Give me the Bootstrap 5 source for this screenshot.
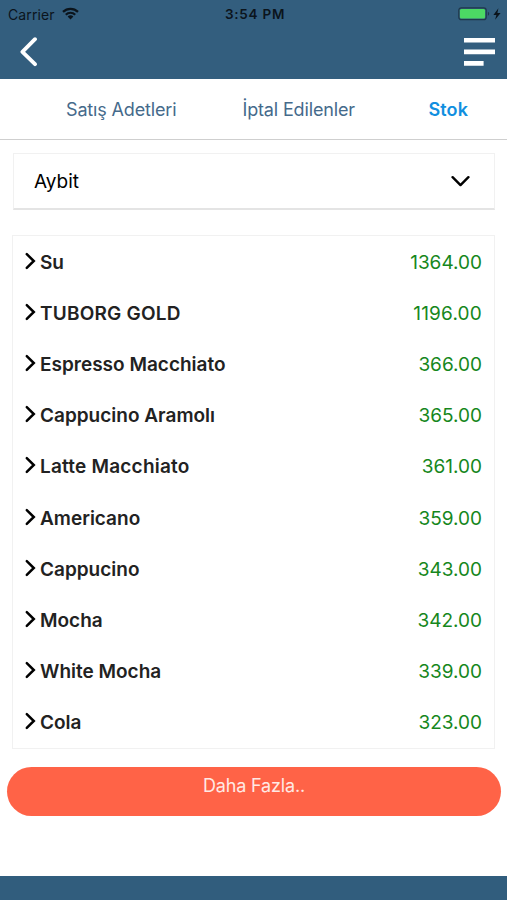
<!DOCTYPE html>
<html lang="tr">
<head>
<meta charset="utf-8">
<meta name="viewport" content="width=device-width, initial-scale=1">
<title>Stok</title>
<link href="https://cdn.jsdelivr.net/npm/bootstrap@5.3.0/dist/css/bootstrap.min.css" rel="stylesheet">
<style>
  body { font-family: Inter, "Liberation Sans", sans-serif; height: 900px; overflow: hidden; color: #222; }
  svg { display: block; flex: none; }
  .app-header { background: #335e7e; height: 79px; }
  .status-bar { height: 27px; padding: 0 5px 0 8px; font-size: 14px; color: #0b141c; }
  .status-bar > div { flex: 1 1 0; }
  .carrier { letter-spacing: .1px; padding-top: 1px; }
  .wifi { margin-left: 7px; margin-bottom: 1px; }
  .status-time { font-size: 13.5px; font-weight: 600; letter-spacing: .75px; padding-top: 1px; }
  .title-bar { height: 49px; padding: 0 11px 0 19px; }
  .plain-btn { background: none; border: 0; padding: 0; }
  .tab-strip { height: 61px; border-bottom: 1px solid #cfcfcf; padding: 0 39px 0 66px; }
  .tab-strip .nav-link { padding: 0; font-size: 18px; line-height: 27px; color: #456a8b; letter-spacing: -.15px; }
  .tab-strip .nav-link + .nav-link { margin-left: 66px; }
  .tab-strip .nav-link.active { color: #118fe0; font-weight: 600; letter-spacing: .1px; margin-left: auto; }
  .picker { margin: 13px 12px 0 13px; height: 57px; padding: 0 24px 0 20px; border: 1px solid #f1f1f1; border-bottom: 2px solid #e4e4e4; font-size: 19px; background: #fff; }
  .picker span { padding-top: 2px; }
  .stock-list { margin: 25px 12px 0 12px; border: 1px solid #f1f1f1; height: 514px; }
  .stock-row { flex: 1 1 0; padding: 0 12px 0 12px; font-size: 19px; line-height: 28px; }
  .stock-row span { padding-top: 2px; }
  .chev { margin-bottom: 2px; }
  .stock-name { font-weight: 600; margin-left: 4px; }
  .stock-qty { color: #16871c; }
  .wide { letter-spacing: .2px; }
  .more-btn { margin: 18px 6px 0 7px; height: 49px; border-radius: 25px; background: #ff6347; color: #ffe9e4; font-size: 18px; letter-spacing: -.15px; line-height: 27px; padding-top: 5px; border: 0; }
  .app-footer { background: #315d7d; height: 24px; }
</style>
</head>
<body class="d-flex flex-column bg-white">
<header class="app-header">
  <div class="status-bar d-flex align-items-center">
    <div class="d-flex align-items-center">
      <span class="carrier">Carrier</span>
      <svg class="wifi" width="17" height="13" viewBox="0 0 17 13" fill="none" stroke="#0b141c" stroke-width="2.2"><path d="M1 4.9a10.6 10.6 0 0 1 15 0M3.8 7.7a6.7 6.7 0 0 1 9.4 0"/><path d="M8.5 12.5 5.6 9.6a4.1 4.1 0 0 1 5.8 0z" fill="#0b141c" stroke="none"/></svg>
    </div>
    <span class="status-time">3:54 PM</span>
    <div class="d-flex align-items-center justify-content-end">
      <svg width="44" height="14" viewBox="0 0 44 14"><rect x=".8" y=".8" width="27.4" height="11.9" rx="2.5" fill="none" stroke="#20384b" stroke-width="1.2"/><rect x="1.9" y="1.9" width="25.2" height="9.7" rx="1.5" fill="#4cd964"/><path d="M29.9 4.8v4q1.3-.6 1.3-2t-1.3-2z" fill="#20384b"/><path d="M40.4 1.2 35.4 7.9h3l-1.3 4.9L42.6 6h-3.2z" fill="#0b141c"/></svg>
    </div>
  </div>
  <div class="title-bar d-flex align-items-center justify-content-between">
    <button class="plain-btn" aria-label="Geri"><svg width="20" height="30" viewBox="0 0 20 30" fill="none" stroke="#fff" stroke-width="3.8" stroke-linecap="round" stroke-linejoin="round"><path d="M16 2.2 3.4 14.8 16 27.2"/></svg></button>
    <button class="plain-btn" aria-label="Menü"><svg width="32" height="28" viewBox="0 0 32 28" fill="#fff"><path d="M0 0h31v4.6H0zM0 11.6h31v4.6H0zM0 23.1h19.6v4.6H0z"/></svg></button>
  </div>
</header>

<nav class="tab-strip nav flex-nowrap align-items-center">
  <a class="nav-link" href="#">Satış Adetleri</a>
  <a class="nav-link" href="#">İptal Edilenler</a>
  <a class="nav-link active" href="#">Stok</a>
</nav>

<main class="flex-grow-1 d-flex flex-column">
  <button class="picker d-flex align-items-center justify-content-between">
    <span>Aybit</span>
    <svg width="19" height="12" viewBox="0 0 19 12" fill="none" stroke="#000" stroke-width="2.4" stroke-linecap="round" stroke-linejoin="round"><path d="M1.6 2.2 9.5 10.1l7.9-7.9"/></svg>
  </button>

  <div class="stock-list d-flex flex-column">
    <div class="stock-row d-flex align-items-center"><svg class="chev" width="11" height="18" viewBox="0 0 11 18"><use href="#chevron"/></svg><span class="stock-name">Su</span><span class="stock-qty ms-auto">1364.00</span></div>
    <div class="stock-row d-flex align-items-center"><svg class="chev" width="11" height="18" viewBox="0 0 11 18"><use href="#chevron"/></svg><span class="stock-name wide">TUBORG GOLD</span><span class="stock-qty wide ms-auto">1196.00</span></div>
    <div class="stock-row d-flex align-items-center"><svg class="chev" width="11" height="18" viewBox="0 0 11 18"><use href="#chevron"/></svg><span class="stock-name">Espresso Macchiato</span><span class="stock-qty ms-auto">366.00</span></div>
    <div class="stock-row d-flex align-items-center"><svg class="chev" width="11" height="18" viewBox="0 0 11 18"><use href="#chevron"/></svg><span class="stock-name">Cappucino Aramolı</span><span class="stock-qty ms-auto">365.00</span></div>
    <div class="stock-row d-flex align-items-center"><svg class="chev" width="11" height="18" viewBox="0 0 11 18"><use href="#chevron"/></svg><span class="stock-name wide">Latte Macchiato</span><span class="stock-qty ms-auto">361.00</span></div>
    <div class="stock-row d-flex align-items-center"><svg class="chev" width="11" height="18" viewBox="0 0 11 18"><use href="#chevron"/></svg><span class="stock-name">Americano</span><span class="stock-qty ms-auto">359.00</span></div>
    <div class="stock-row d-flex align-items-center"><svg class="chev" width="11" height="18" viewBox="0 0 11 18"><use href="#chevron"/></svg><span class="stock-name">Cappucino</span><span class="stock-qty ms-auto">343.00</span></div>
    <div class="stock-row d-flex align-items-center"><svg class="chev" width="11" height="18" viewBox="0 0 11 18"><use href="#chevron"/></svg><span class="stock-name">Mocha</span><span class="stock-qty ms-auto">342.00</span></div>
    <div class="stock-row d-flex align-items-center"><svg class="chev" width="11" height="18" viewBox="0 0 11 18"><use href="#chevron"/></svg><span class="stock-name">White Mocha</span><span class="stock-qty ms-auto">339.00</span></div>
    <div class="stock-row d-flex align-items-center"><svg class="chev" width="11" height="18" viewBox="0 0 11 18"><use href="#chevron"/></svg><span class="stock-name">Cola</span><span class="stock-qty ms-auto">323.00</span></div>
  </div>

  <button class="more-btn d-flex align-items-start justify-content-center">Daha Fazla..</button>
</main>

<footer class="app-footer"></footer>

<svg width="0" height="0" class="d-none"><symbol id="chevron" viewBox="0 0 11 18"><path d="M1.8 2.2 8.8 9l-7 6.8" fill="none" stroke="#000" stroke-width="2.5" stroke-linecap="round" stroke-linejoin="miter"/></symbol></svg>
<script src="https://cdn.jsdelivr.net/npm/bootstrap@5.3.0/dist/js/bootstrap.bundle.min.js"></script>
</body>
</html>
